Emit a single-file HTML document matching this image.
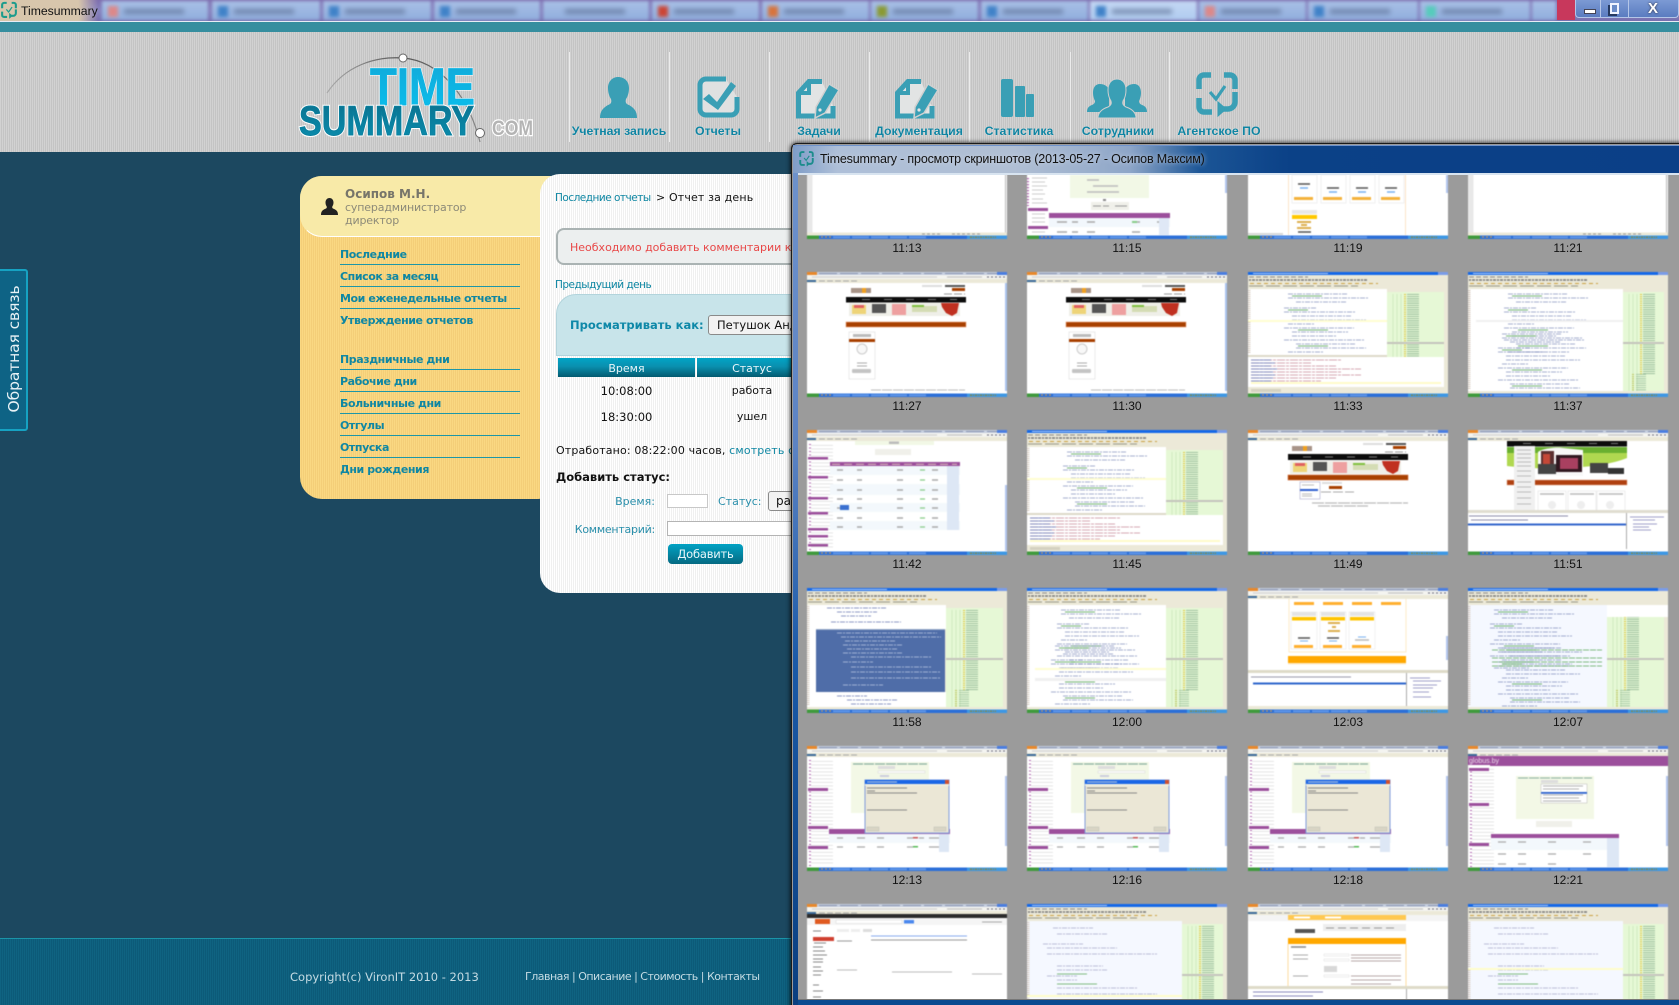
<!DOCTYPE html>
<html lang="ru"><head><meta charset="utf-8"><title>Timesummary</title>
<style>
html,body{margin:0;padding:0;background:#1c4860}
#p{position:relative;width:1679px;height:1005px;overflow:hidden;background:#1c4860;font-family:"DejaVu Sans","Liberation Sans",sans-serif;font-size:11px;color:#111}
.a{position:absolute;white-space:nowrap}
.nl{position:absolute;top:123px;font:bold 12.3px/16px "Liberation Sans",sans-serif;color:#0f84a2;text-align:center;width:100px;text-shadow:0 0 1px #fff}
.sep{position:absolute;top:52px;height:90px;width:1px;background:#ececec}
.ml{position:absolute;left:340px;width:180px;height:21px;border-bottom:1px solid #1d96a8;font:bold 11px/23px "DejaVu Sans",sans-serif;color:#0f87a3;letter-spacing:-.42px}
.tab{position:absolute;top:1px;height:19px;background:linear-gradient(#a9c0e6,#90aedd);box-shadow:0 0 3px #7c6bb0}
.tab i{position:absolute;left:22px;top:8px;height:5px;width:60px;background:#5c6f94;filter:blur(2px);opacity:.7}
.tab b{position:absolute;left:6px;top:5px;width:10px;height:11px;background:#3f82c8;filter:blur(1px)}
.hd{background:linear-gradient(#01a4c6,#0a8fae 45%,#035b70);color:#e8f6fa;text-align:center;font-size:11px;line-height:21px}
.lk{font-size:10.5px;letter-spacing:-.5px;color:#0f87a3;line-height:16px}
a{color:inherit;text-decoration:none}
</style></head><body><div id="p">

<!-- OS title strip -->
<div class="a" style="left:0;top:0;width:1679px;height:21px;overflow:hidden;background:#7b66a8">
<div style="position:absolute;left:-4px;top:-4px;width:1690px;height:30px;filter:blur(1.6px);background:linear-gradient(#7b66a8,#8a86c0 50%,#6f64a6)">
<div class="tab" style="left:106px;top:5px;width:106px"><b style="background:#d88"></b><i></i></div>
<div class="tab" style="left:216px;top:5px;width:108px"><b></b><i></i></div>
<div class="tab" style="left:327px;top:5px;width:108px"><b></b><i></i></div>
<div class="tab" style="left:438px;top:5px;width:106px"><b></b><i></i></div>
<div class="tab" style="left:547px;top:5px;width:106px"><i></i></div>
<div class="tab" style="left:656px;top:5px;width:107px"><b style="background:#c43"></b><i></i></div>
<div class="tab" style="left:766px;top:5px;width:107px"><b style="background:#d8733a"></b><i></i></div>
<div class="tab" style="left:875px;top:5px;width:107px"><b style="background:#8a9a30"></b><i></i></div>
<div class="tab" style="left:985px;top:5px;width:107px"><b></b><i></i></div>
<div class="tab" style="left:1094px;top:5px;width:107px;background:linear-gradient(#c4d8f4,#b0ccf0)"><b></b><i></i></div>
<div class="tab" style="left:1203px;top:5px;width:107px"><b style="background:#d88"></b><i></i></div>
<div class="tab" style="left:1312px;top:5px;width:110px"><b></b><i></i></div>
<div class="tab" style="left:1424px;top:5px;width:110px"><b style="background:#5cb"></b><i></i></div>
<div class="tab" style="left:1536px;top:5px;width:24px"></div>
</div></div>
<div class="a" style="left:1557px;top:0;width:18px;height:20px;background:#c8385c"></div>
<div class="a" style="left:0;top:0;width:98px;height:21px;background:linear-gradient(90deg,#d8c6ac 80%,rgba(192,168,176,0))"></div>
<svg class="a" style="left:1px;top:1px" width="16" height="19" viewBox="0 0 42 46"><use href="#ag" stroke="#1c9c8c" fill="#1c9c8c"/></svg>
<div class="a" style="left:21px;top:3px;font:12.2px/16px 'Liberation Sans',sans-serif;color:#111">Timesummary</div>
<div class="a" style="left:1575px;top:0;width:104px;height:18px;background:linear-gradient(#7c9ad4,#5a7cc0);border:1px solid #b4c6e8;border-top:0;border-radius:0 0 4px 4px;box-sizing:border-box"></div>
<div class="a" style="left:1600px;top:0;width:1px;height:17px;background:#b4c6e8"></div>
<div class="a" style="left:1628px;top:0;width:1px;height:17px;background:#b4c6e8"></div>
<div class="a" style="left:1584px;top:9px;width:10px;height:3px;background:#fff;border:1px solid #445"></div>
<div class="a" style="left:1610px;top:3px;width:5px;height:7px;background:#6a8cc8;border:2px solid #f0f4ff;box-shadow:-2px 2px 0 #263a60"></div>
<div class="a" style="left:1648px;top:0;font:bold 15px/17px 'Liberation Sans',sans-serif;color:#fff;text-shadow:0 0 2px #223">X</div>
<div class="a" style="left:0;top:21px;width:1679px;height:1px;background:#e8ecf4"></div>
<div class="a" style="left:0;top:22px;width:1679px;height:10px;background:#368e9f"></div>

<!-- Header -->
<div class="a" style="left:0;top:32px;width:1679px;height:120px;background:repeating-linear-gradient(90deg,#d2d2d2 0 1px,#c4c4c4 1px 2px)"></div>

<svg class="a" style="left:290px;top:50px" width="250" height="96" viewBox="290 50 250 96">
<defs><linearGradient id="gt" x1="0" y1="0" x2="0" y2="1"><stop offset="0" stop-color="#13a8d8"/><stop offset="1" stop-color="#08c0ee"/></linearGradient>
<linearGradient id="gs" x1="0" y1="0" x2="0" y2="1"><stop offset="0" stop-color="#0a6f8c"/><stop offset="1" stop-color="#0a8fb0"/></linearGradient>
<linearGradient id="arc" x1="0" y1="0" x2="1" y2="0"><stop offset="0" stop-color="#aaa"/><stop offset=".5" stop-color="#555"/><stop offset="1" stop-color="#888"/></linearGradient></defs>
<path d="M327 93C345 66 375 56 403 58C440 61 468 95 480 142" fill="none" stroke="url(#arc)" stroke-width="1.2"/>
<circle cx="403" cy="58" r="4" fill="#fff" stroke="#666"/>
<text x="370" y="105" font-family="Liberation Sans" font-weight="700" font-size="53" textLength="105" lengthAdjust="spacingAndGlyphs" fill="url(#gt)" stroke="#fff" stroke-width="2" paint-order="stroke">TIME</text>
<text x="370" y="105" font-family="Liberation Sans" font-weight="700" font-size="53" textLength="105" lengthAdjust="spacingAndGlyphs" fill="url(#gt)" stroke="#10b4e2" stroke-width=".9">TIME</text>
<text x="299" y="135" font-family="Liberation Sans" font-weight="700" font-size="42" textLength="175" lengthAdjust="spacingAndGlyphs" fill="url(#gs)" stroke="#fff" stroke-width="3" paint-order="stroke">SUMMARY</text>
<text x="299" y="135" font-family="Liberation Sans" font-weight="700" font-size="42" textLength="175" lengthAdjust="spacingAndGlyphs" fill="url(#gs)" stroke="#0a7f9e" stroke-width=".9">SUMMARY</text>
<circle cx="480" cy="133" r="4.5" fill="#fff" stroke="#666"/>
<text x="492" y="135" font-family="Liberation Sans" font-weight="700" font-size="21" textLength="41" lengthAdjust="spacingAndGlyphs" fill="#b4b4b4" stroke="#fff" stroke-width="2.5" paint-order="stroke">COM</text>
</svg>

<div class="sep" style="left:569px"></div><div class="sep" style="left:669px"></div><div class="sep" style="left:769px"></div><div class="sep" style="left:869px"></div><div class="sep" style="left:969px"></div><div class="sep" style="left:1070px"></div><div class="sep" style="left:1169px"></div>

<svg class="a" style="left:0;top:0;pointer-events:none" width="1300" height="130" viewBox="0 0 1300 130">
<defs>
<g id="ag" stroke-width="0"><path d="M15 3H8a5 5 0 0 0-5 5V17M28 3h6a5 5 0 0 1 5 5V17M3 26v9a5 5 0 0 0 5 5h8M39 20v10a7 7 0 0 1-7 7h-6" fill="none" stroke-width="5.500"/><path d="M30 37l-8-7v14z" stroke-width="1"/><path d="M14 20l6 7 9-13" fill="none" stroke-width="3.200"/></g>
<g id="nt"><path d="M26 2.500H13L2.500 14V37H37V27" fill="#e2e4e4" stroke="#3a9fb5" stroke-width="5"/><path d="M13 2V14H2" fill="none" stroke="#3a9fb5" stroke-width="4"/><path d="M33 5l10 6-14 23-10 5 1-11z" fill="#3a9fb5" stroke="#d0d0d0" stroke-width="1.500"/><circle cx="24" cy="31" r="1.600" fill="#e4e4e4"/></g>
</defs>
<path transform="translate(600 77)" d="M18 0c-6 0-10 5-10 11 0 4 1 8 3 11 1 3 0 5-3 6-5 3-8 6-8 13h37c0-7-3-10-8-13-3-1-4-3-3-6 2-3 3-7 3-11 0-6-4-11-11-11z" fill="#3a9fb5"/>
<g transform="translate(697 76)"><path d="M29 3H9a6 6 0 0 0-6 6V33a6 6 0 0 0 6 6H34a6 6 0 0 0 6-6V21" fill="#dfe1e1" stroke="#3a9fb5" stroke-width="5"/><path d="M12 18l8 8L34 6l5 4-18 24-15-11z" fill="#3a9fb5"/></g>
<use href="#nt" x="796" y="79"/><use href="#nt" x="895" y="79"/>
<g fill="#3a9fb5"><rect x="1001" y="79" width="12" height="38" rx="2"/><rect x="1015" y="86" width="10" height="31" rx="1"/><rect x="1026" y="94" width="8" height="23" rx="1"/></g>
<g transform="translate(1087 79)" fill="#3a9fb5"><path d="M13 5c-5 0-7 4-7 9 0 3 1 6 2 8 0 2-1 3-3 4-3 1-5 3-5 7h16l6-5V10c-2-3-5-5-9-5zM47 5c5 0 7 4 7 9 0 3-1 6-2 8 0 2 1 3 3 4 3 1 5 3 5 7H44l-6-5V10c2-3 5-5 9-5z"/><path d="M30 0c-6 0-9 5-9 11 0 4 1 8 3 11 1 3-1 5-3 6-6 2-10 5-10 11h38c0-6-4-9-10-11-2-1-4-3-3-6 2-3 3-7 3-11 0-6-3-11-9-11z" stroke="#cfcfcf" stroke-width="1"/></g>
<use href="#ag" x="1196" y="72" stroke="#3a9fb5" fill="#3a9fb5"/>
</svg>

<div class="nl" style="left:569px">Учетная запись</div>
<div class="nl" style="left:668px">Отчеты</div>
<div class="nl" style="left:769px">Задачи</div>
<div class="nl" style="left:869px">Документация</div>
<div class="nl" style="left:969px">Статистика</div>
<div class="nl" style="left:1068px">Сотрудники</div>
<div class="nl" style="left:1169px">Агентское ПО</div>

<!-- Feedback tab -->
<div class="a" style="left:-3px;top:269px;width:31px;height:162px;box-sizing:border-box;background:#0e6385;border:2px solid #16a2c2;border-radius:3px"></div>
<div class="a" style="left:14px;top:349px;width:0;height:0"><div style="transform:translate(-50%,-50%) rotate(-90deg);white-space:nowrap;font:15.5px/18px 'DejaVu Sans',sans-serif;color:#e8f2f6;width:134px;text-align:center;letter-spacing:-.1px">Обратная связь</div></div>

<!-- Sidebar -->
<div class="a" style="left:300px;top:176px;width:260px;height:323px;border-radius:22px;background:repeating-linear-gradient(90deg,#fad882 0 1px,#f4ce78 1px 2px)"></div>
<div class="a" style="left:300px;top:176px;width:260px;height:61px;box-sizing:border-box;border-radius:22px 0 0 22px;background:#f8eaa8;border:1px solid #fff;border-right:0;border-top-color:#f8eaa8;border-left-color:#f8eaa8"></div>
<svg class="a" style="left:321px;top:198px" width="17" height="17" viewBox="0 0 17 17"><path d="M8.500 0c-2.500 0-4 2-4 4.500 0 1.500.5 3 1.200 4 .3 1 0 1.800-1.200 2.300C2 11.800 0 13 0 17h17c0-4-2-5.200-4.500-6.200-1.200-.5-1.500-1.300-1.200-2.300.7-1 1.200-2.500 1.200-4C12.500 2 11 0 8.500 0z" fill="#222"/></svg>
<div class="a" style="left:345px;top:187px;font:bold 12px/14px 'DejaVu Sans',sans-serif;color:#77756a">Осипов М.Н.</div>
<div class="a" style="left:345px;top:201px;font:11px/14px 'DejaVu Sans',sans-serif;color:#8c8a78;letter-spacing:-.15px">суперадминистратор</div>
<div class="a" style="left:345px;top:214px;font:11px/14px 'DejaVu Sans',sans-serif;color:#8c8a78;letter-spacing:-.15px">директор</div>

<div class="ml" style="top:243px">Последние</div>
<div class="ml" style="top:265px">Список за месяц</div>
<div class="ml" style="top:287px">Мои еженедельные отчеты</div>
<div class="ml" style="top:309px;border:0">Утверждение отчетов</div>
<div class="ml" style="top:348px">Праздничные дни</div>
<div class="ml" style="top:370px">Рабочие дни</div>
<div class="ml" style="top:392px">Больничные дни</div>
<div class="ml" style="top:414px">Отгулы</div>
<div class="ml" style="top:436px">Отпуска</div>
<div class="ml" style="top:458px;border:0">Дни рождения</div>

<!-- Content panel -->
<div class="a" style="left:540px;top:174px;width:270px;height:419px;border-radius:20px 0 0 20px;background:repeating-linear-gradient(90deg,#fff 0 1px,#f0f0f0 1px 2px)"></div>
<div class="a lk" style="left:555px;top:190px">Последние отчеты</div>
<div class="a" style="left:656px;top:190px;line-height:16px;color:#111">&gt;</div>
<div class="a" style="left:669px;top:190px;line-height:16px;color:#111;letter-spacing:.15px">Отчет за день</div>
<div class="a" style="left:556px;top:228px;width:260px;height:37px;box-sizing:border-box;background:#ecefef;border:2px solid #aab3b3;border-radius:8px"></div>
<div class="a" style="left:570px;top:240px;font-size:11px;line-height:16px;color:#e84848;width:222px;overflow:hidden">Необходимо добавить комментарии к</div>
<div class="a lk" style="left:555px;top:277px">Предыдущий день</div>
<div class="a" style="left:556px;top:294px;width:260px;height:62px;box-sizing:border-box;background:#c8e4ea;border:1px solid #b2d4dc;border-radius:20px 0 0 0"></div>
<div class="a" style="left:570px;top:317px;font:bold 11.5px/16px 'DejaVu Sans',sans-serif;color:#0e88a8">Просматривать как:</div>
<div class="a" style="left:708px;top:315px;width:110px;height:20px;box-sizing:border-box;background:#f2f2f2;border:1px solid #8a8a8a;border-radius:3px;font-size:11.5px;line-height:18px;padding-left:8px;color:#111">Петушок Андрей</div>
<div class="a hd" style="left:558px;top:358px;width:137px;height:19px">Время</div>
<div class="a hd" style="left:697px;top:358px;width:110px;height:19px"><div style="position:absolute;left:110px;top:0;width:10px;height:19px;background:#06809c"></div>Статус</div>
<div class="a" style="left:558px;top:383px;width:137px;text-align:center;font-size:11.5px;line-height:16px">10:08:00</div>
<div class="a" style="left:692px;top:383px;width:120px;text-align:center;font-size:11px;line-height:16px">работа</div>
<div class="a" style="left:558px;top:409px;width:137px;text-align:center;font-size:11.5px;line-height:16px">18:30:00</div>
<div class="a" style="left:692px;top:409px;width:120px;text-align:center;font-size:11px;line-height:16px">ушел</div>
<div class="a" style="left:556px;top:443px;font-size:11px;line-height:16px;letter-spacing:.15px">Отработано: 08:22:00 часов, <span style="color:#0f87a3">смотреть скриншоты</span></div>
<div class="a" style="left:556px;top:469px;font:bold 11.500px/16px 'DejaVu Sans',sans-serif;color:#111">Добавить статус:</div>
<div class="a" style="left:560px;width:95px;text-align:right;top:494px;font-size:11px;line-height:16px;color:#2a8fab">Время:</div>
<div class="a" style="left:667px;top:494px;width:41px;height:14px;box-sizing:border-box;background:#fff;border:1px solid #c8c8c8"></div>
<div class="a" style="left:718px;top:494px;font-size:11px;line-height:16px;color:#2a8fab">Статус:</div>
<div class="a" style="left:768px;top:491px;width:50px;height:20px;box-sizing:border-box;background:#f2f2f2;border:1px solid #8a8a8a;border-radius:3px;font-size:12px;line-height:18px;padding-left:7px">работа</div>
<div class="a" style="left:560px;width:95px;text-align:right;top:522px;font-size:11px;line-height:16px;color:#2a8fab;letter-spacing:-.25px">Комментарий:</div>
<div class="a" style="left:667px;top:521px;width:150px;height:15px;box-sizing:border-box;background:#fff;border:1px solid #b4b4b4"></div>
<div class="a" style="left:668px;top:544px;width:75px;height:20px;border-radius:4px;background:linear-gradient(#01a2c4,#056a82);color:#e8f6fa;font-size:11.5px;line-height:20px;text-align:center;letter-spacing:-.2px">Добавить</div>

<!-- Footer -->
<div class="a" style="left:0;top:938px;width:1679px;height:1px;background:#1a94a8"></div>
<div class="a" style="left:0;top:939px;width:1679px;height:66px;background:repeating-linear-gradient(90deg,#0f6381 0 1px,#0c5a78 1px 2px)"></div>
<div class="a" style="left:290px;top:969px;font-size:11.5px;line-height:16px;color:#c4dbe3">Copyright(c) VironIT 2010 - 2013</div>
<div class="a" style="left:525px;top:969px;font-size:11px;line-height:16px;color:#c4dbe3;letter-spacing:-.5px">Главная | Описание | Стоимость | Контакты</div>

<!-- Window -->
<div class="a" style="left:792px;top:144px;width:900px;height:870px;background:#9b9b9b;border-radius:5px 0 0 0;box-shadow:-2px 0 5px rgba(0,0,0,.55),0 -2px 4px rgba(0,0,0,.5);outline:1px solid #1a1a1a"></div>
<div class="a" style="left:793px;top:145px;width:5px;height:860px;background:linear-gradient(#6f93cc,#5c83c4 35%,#1b5aa8 60%,#0a3f80)"></div>
<div class="a" style="left:793px;top:145px;width:886px;height:28px;background:linear-gradient(90deg,#7f9dc8,#aebfd8 5%,#b0bfd4 25%,#8ea6c8 38%,#1b5596 46%,#0b4187 56%,#0b3f87);box-shadow:inset 0 1px 0 #6f93cc"></div>
<div class="a" style="left:798px;top:173px;width:881px;height:2px;background:#d8e4f0"></div>
<svg class="a" style="left:799px;top:151px" width="15" height="16" viewBox="0 0 42 46"><use href="#ag" stroke="#1c8c8c" fill="#1c8c8c"/></svg>
<div class="a" style="left:820px;top:151px;font:12.5px/16px 'Liberation Sans',sans-serif;letter-spacing:-.17px;color:#111;text-shadow:0 0 5px #d0d8e4">Timesummary - просмотр скриншотов (2013-05-27 - Осипов Максим)</div>
<div class="a" style="left:798px;top:999px;width:881px;height:1px;background:#777"></div>
<div class="a" style="left:798px;top:1000px;width:881px;height:5px;background:#0a4a90"></div>

<!-- Thumbnails -->
<svg class="a" style="left:798px;top:175px" width="881" height="824" viewBox="0 0 881 824">
<defs>
<g id="tb"><rect y="121.500" width="200" height="3.500" fill="#2b6fd8"/><rect y="121.500" width="12" height="3.500" fill="#3f9a3c"/><path d="M14 123h2M18 123h2M22 123h2" stroke="#e0a040"/><path d="M26 123.200H120" stroke="#5f95e8" stroke-width="2" stroke-dasharray="17 2"/><rect x="160" y="121.500" width="40" height="3.500" fill="#3d97e4"/><path d="M163 123.200h26" stroke="#884" stroke-width="1.500" stroke-dasharray="2 1 1 1"/></g>
<g id="ff"><rect width="200" height="3" fill="#c6cfe0"/><rect width="10" height="3" fill="#e8882a"/><path d="M12 1.500H200" stroke="#8a95b0" stroke-width="1" stroke-dasharray="18 3"/><rect x="190" width="10" height="3" fill="#4a7de0"/><rect y="3" width="200" height="4" fill="#f4f4f0"/><path d="M5 5H130" stroke="#ccc"/><path d="M140 5h35" stroke="#bbb"/><path d="M180 5h18" stroke="#667" stroke-dasharray="2 2"/><rect y="7" width="200" height="4" fill="#ece9d8"/><rect y="8" width="9" height="2" fill="#3a6a9a"/><path d="M12 9H50" stroke="#a8a8a8" stroke-dasharray="6 2"/><rect y="11" width="200" height="111" fill="#fff"/></g>
<g id="ideC"><rect width="200" height="125" fill="#ece9d8"/><rect width="200" height="3" fill="#1468e8"/><path d="M5 1.500H80" stroke="#a8c8f8"/><rect x="190" width="10" height="3" fill="#7a9ce8"/><path d="M1 5H60" stroke="#888" stroke-dasharray="5 2"/><path d="M1 8H120" stroke="#777" stroke-width="1.500" stroke-dasharray="2 1 3 1"/><path d="M2 11.500H130" stroke="#caa040" stroke-width="1" stroke-dasharray="4 3"/><path d="M1 14H110" stroke="#998" stroke-dasharray="14 3"/></g>
<g id="tree"><rect width="57" height="104" fill="#e6f8d6"/><rect y="0" width="57" height="3" fill="#ece9d8"/><path d="M6 5v98M10 5v98M14 5v98" stroke="#bcdca8" stroke-width=".5"/><path d="M18 5V85" stroke="#e0c840" stroke-width="2" stroke-dasharray="1 1.200"/><path d="M26 5V85" stroke="#6a9a78" stroke-width="12" stroke-dasharray=".8 1.400" opacity=".75"/><path d="M10 85V103" stroke="#c0c860" stroke-width="2" stroke-dasharray="1 1.200"/><path d="M18 85V103" stroke="#6a9a78" stroke-width="10" stroke-dasharray=".8 1.400" opacity=".6"/><rect y="53" width="57" height="2" fill="#c4c4bc"/></g>
<g id="cd1"><path d="M1 18V82" stroke="#c9b8a8" stroke-width="3" stroke-dasharray=".8 1.200"/><path d="M40 22h60M40 26h80M48 30h50M36 36h32M36 40h72M44 44h60M44 48h74M40 52h26M36 56h70M44 60h56M44 64h44M36 68h80M48 72h60M48 76h70M40 80h36" stroke="#6a7ab0" stroke-width=".8" stroke-dasharray="5 1 2 1" opacity=".8"/><path d="M44 24h30M40 38h20M50 58h30M50 74h30" stroke="#48a048" stroke-width=".8"/></g>
<g id="log"><rect y="83" width="139" height="2" fill="#dcd9c8"/><rect y="85" width="196" height="30" fill="#fff"/><path d="M3 88h90M3 91h60M3 94h85M3 97h110M3 100h90M3 103h110M3 106h85M3 109h70" stroke="#c88a9a" stroke-width=".8" stroke-dasharray="8 1 3 1"/><path d="M3 88h20M3 91h24M3 94h20M3 97h26M3 100h22M3 103h24M3 106h22M3 109h20" stroke="#6a80c0" stroke-width=".8"/><rect x="3" y="110" width="190" height="2" fill="#fffcc8"/></g>

<symbol id="sW" viewBox="0 0 200 125"><rect width="200" height="125" fill="#fff"/><rect width="5.500" height="119" fill="#e8e8e8"/><rect x="198" width="1" height="119" fill="#bbb"/><rect y="118.500" width="200" height="3" fill="#ece9d8"/><path d="M115 120h20M145 120h30" stroke="#999" stroke-dasharray="3 2"/><use href="#tb"/></symbol>

<symbol id="sA" viewBox="0 0 200 125"><rect width="200" height="125" fill="#fff"/><rect x="43" y="61" width="79" height="23" fill="#f2f8e6"/><path d="M60 66h12M66 72h25M60 78h32" stroke="#bbb" stroke-width="1.500"/><rect x="76" y="85" width="3" height="2" fill="#888"/><rect x="64" y="88" width="38" height="8" fill="#f0f0ea"/><path d="M66 92h8M76 92h6M88 92h12" stroke="#999"/><path d="M1 64V92" stroke="#b068b0" stroke-width="2" stroke-dasharray="1.200 1.800"/><path d="M5 64H20M5 68H18M5 72H20M5 76H16M5 80H18M5 85H16M5 89H20" stroke="#ccc"/><rect x="1" y="94" width="20" height="3" fill="#9c4f9c"/><rect x="1" y="112" width="20" height="3" fill="#9c4f9c"/><path d="M5 100H18M5 104H18M5 108H18M5 118H18" stroke="#ccc"/><rect x="22" y="99" width="121" height="5" fill="#9c4f9c"/><rect x="22" y="104" width="121" height="9" fill="#f2f7fc"/><path d="M30 108h10M45 108h6M60 108h8M105 108h8M130 108h8" stroke="#aaa" stroke-width="1.500"/><path d="M30 118h10M45 118h6M60 118h8M105 118h8" stroke="#aaa" stroke-width="1.500"/><rect x="132" y="104" width="10" height="17" fill="#dfe8f6"/><rect x="105" y="107" width="5" height="2" fill="#8c8"/><rect x="198" y="61" width="2" height="18" fill="#b2c6ee"/><use href="#tb"/></symbol>

<symbol id="sS" viewBox="0 0 200 125"><rect width="200" height="125" fill="#fff"/><path d="M40.500 60V121M157.500 60V121" stroke="#fbe3c8"/><g fill="none" stroke="#f0f0f0"><rect x="44" y="61" width="25" height="28"/><rect x="73" y="61" width="25" height="28"/><rect x="102" y="61" width="25" height="28"/><rect x="131" y="61" width="25" height="28"/></g><path d="M50 70h12M79 74h12M108 74h12M137 74h12" stroke="#555" stroke-width="1.500"/><path d="M52 74h8M81 78h8M110 78h8M139 78h8" stroke="#77b0f0" stroke-width="1.500"/><rect x="46" y="83" width="19" height="3" fill="#f4b23c"/><rect x="75" y="83" width="19" height="3" fill="#f4b23c"/><rect x="104" y="83" width="19" height="3" fill="#f4b23c"/><rect x="133" y="83" width="19" height="3" fill="#f4b23c"/><rect x="44" y="96" width="25" height="4" fill="#e8e8e8"/><rect x="44" y="101" width="25" height="4" fill="#ffc800"/><path d="M49 108h14M53 111h6M49 114h14" stroke="#ddb050" stroke-width="2"/><path d="M50 118h13" stroke="#555" stroke-width="1.500"/><rect y="119" width="35" height="2" fill="#d8d8d8"/><rect x="198" y="61" width="2" height="18" fill="#b2c6ee"/><use href="#tb"/></symbol>

<g id="au"><use href="#ff"/><rect x="44" y="16" width="20" height="5" fill="#a89488"/><rect x="55" y="16" width="4" height="5" fill="#f0a020"/><rect x="115" y="13" width="20" height="2" fill="#ddd"/><rect x="138" y="13" width="20" height="2" fill="#555"/><rect x="145" y="16" width="13" height="3" fill="#a84000"/><path d="M137 22H158" stroke="#999" stroke-dasharray="8 2"/></g>
<g id="ban"><rect x="42" y="31" width="111" height="13" fill="#efefe8"/><rect x="45" y="33" width="14" height="9" fill="#eed478"/><rect x="47" y="33" width="10" height="3" fill="#e06060"/><rect x="65" y="32" width="14" height="9" fill="#555"/><rect x="85" y="32" width="14" height="11" fill="#eea0a0"/><rect x="105" y="34" width="25" height="6" fill="#d4dcb4"/><rect x="105" y="33" width="12" height="2" fill="#80c040"/><path d="M134 31h18l-2 10-5 3-6-3-4-6z" fill="#c03020"/></g>

<symbol id="sD" viewBox="0 0 200 125"><use href="#au"/><rect x="39" y="25" width="120" height="5.500" fill="#0c0c0c"/><path d="M55 27.500H150" stroke="#777" stroke-dasharray="8 14"/><use href="#ban"/><rect x="39" y="50" width="120" height="5" fill="#a84000" stroke="#e8a078" stroke-width=".6"/><rect x="42" y="60" width="26" height="47" fill="#fff" stroke="#ddd" stroke-width=".6"/><rect x="46" y="62" width="18" height="3" fill="#bbb"/><rect x="42" y="67" width="26" height="3" fill="#a84000"/><circle cx="55" cy="77" r="5" fill="#f8f8f8" stroke="#ccc"/><path d="M50 91h10M50 94h10" stroke="#aaa"/><rect x="45" y="97" width="19" height="4" rx="1" fill="#c4c4c4"/><rect x="198" y="11" width="2" height="108" fill="#aac4ee"/><path d="M64 118H158" stroke="#bbb" stroke-dasharray="10 1"/><use href="#tb"/></symbol>

<symbol id="sH" viewBox="0 0 200 125"><use href="#au"/><rect x="40" y="24" width="120" height="6" fill="#0c0c0c"/><path d="M55 27H150" stroke="#777" stroke-dasharray="8 14"/><use href="#ban"/><rect x="40" y="45" width="120" height="5" fill="#a84000" stroke="#d07040" stroke-width=".6"/><rect x="52" y="52" width="20" height="17" fill="#fff" stroke="#aac" stroke-width=".6"/><rect x="52" y="59" width="18" height="2" fill="#3060d0"/><path d="M54 55h12M54 64h10M54 66h10" stroke="#bbb"/><rect x="74" y="52" width="20" height="2" fill="#ddd"/><rect x="81" y="56" width="13" height="3" fill="#a84000"/><path d="M73 62h33" stroke="#aaa" stroke-dasharray="10 2"/><path d="M64 73h96M70 76h50" stroke="#bbb" stroke-width="1.200" stroke-dasharray="12 1"/><use href="#tb"/></symbol>

<symbol id="sI" viewBox="0 0 200 125"><use href="#ff"/><rect x="39" y="11" width="120" height="5.500" fill="#0c0c0c"/><path d="M55 13.500H150" stroke="#777" stroke-dasharray="8 14"/><rect x="39" y="17" width="120" height="30" fill="#fff"/><path d="M39 17H159V28C130 40 70 40 39 36z" fill="#b0d850"/><rect x="39" y="17" width="120" height="6" fill="#6ab030"/><path d="M70 38V22C75 18 90 17 95 18L115 20V46H70z" fill="#f8f8f8"/><rect x="73" y="21" width="13" height="22" fill="#5c3030"/><rect x="75" y="24" width="7" height="16" fill="#c44838"/><rect x="70" y="34" width="18" height="10" fill="#444"/><rect x="88" y="25" width="26" height="17" fill="#301820"/><rect x="92" y="28" width="18" height="11" fill="#a84060"/><rect x="122" y="33" width="18" height="10" fill="#444"/><rect x="140" y="38" width="16" height="6" fill="#333"/><rect x="39" y="50" width="120" height="5" fill="#b04010" stroke="#e0a080" stroke-width=".5"/><g fill="#fff" stroke="#eee"><rect x="70" y="61" width="28" height="20"/><rect x="100" y="61" width="28" height="20"/><rect x="129" y="61" width="28" height="20"/></g><path d="M72 64h24M102 64h24M131 64h24" stroke="#bbb" stroke-width="1.500"/><circle cx="84" cy="75" r="4" fill="#eee"/><circle cx="113" cy="75" r="4" fill="#eee"/><circle cx="142" cy="75" r="4" fill="#eee"/><rect x="46" y="16" width="21" height="64" fill="#f0f0f0"/><path d="M49 20H63M49 24H63M49 28H63M49 32H63M49 36H63M49 41H63M49 46H63M49 52H63M49 57H63M49 62H63M49 68H63M49 74H63" stroke="#bbb" stroke-width="1"/><rect y="80" width="200" height="3" fill="#e0ddd0"/><rect y="83" width="200" height="36" fill="#fff"/><path d="M1 86H100M3 90H60" stroke="#8a8aaa"/><rect y="93.500" width="158" height="2" fill="#3366cc"/><rect x="158" y="83" width="1" height="36" fill="#aaa"/><path d="M162 87h34M165 90h22M165 94h24M165 97h16M165 100h18" stroke="#88b" opacity=".8"/><use href="#tb"/></symbol>

<symbol id="sJ" viewBox="0 0 200 125"><use href="#ff"/><g fill="#ffb030"><rect x="46" y="14" width="20" height="3"/><rect x="75" y="14" width="20" height="3"/><rect x="104" y="14" width="20" height="3"/><rect x="133" y="14" width="20" height="3"/></g><path d="M41 11v53h117V11" fill="none" stroke="#fdebc8"/><g fill="#fff" stroke="#f2f2f2"><rect x="43" y="24" width="26" height="37"/><rect x="72" y="24" width="26" height="37"/><rect x="101" y="24" width="26" height="37"/></g><g fill="#e4e4e4"><rect x="44" y="24" width="24" height="4"/><rect x="73" y="24" width="24" height="4"/><rect x="102" y="24" width="24" height="4"/></g><g fill="#ffc400"><rect x="44" y="29" width="24" height="3.500"/><rect x="73" y="29" width="24" height="3.500"/><rect x="102" y="29" width="24" height="3.500"/></g><path d="M80 35h12M84 39h4M80 43h12" stroke="#ddb050" stroke-width="2"/><path d="M50 50h12M79 50h12" stroke="#555" stroke-width="1.500"/><path d="M107 52h14" stroke="#bbb" stroke-width="1.500"/><path d="M52 53h8M81 53h8M110 49h8" stroke="#77b0f0"/><g fill="#ffb030"><rect x="46" y="57" width="19" height="3"/><rect x="75" y="57" width="19" height="3"/><rect x="104" y="57" width="19" height="3"/></g><rect x="40" y="68" width="118" height="7" fill="#ffa800"/><rect x="40" y="75" width="118" height="1.500" fill="#fdebc8"/><rect x="198" y="48" width="2" height="24" fill="#b2c6ee"/><rect y="82" width="200" height="3" fill="#dedbc8"/><rect y="85" width="200" height="33" fill="#fff"/><path d="M3 89h100" stroke="#99a"/><rect x="5" y="94.500" width="153" height="2" fill="#2e66cc"/><rect x="158" y="85" width="1" height="33" fill="#aaa"/><path d="M162 90h20M165 93h28M165 97h24M165 100h20M165 104h16M165 109h18" stroke="#88b" opacity=".8"/><rect y="118" width="200" height="3.500" fill="#ece9d8"/><use href="#tb"/></symbol>

<g id="lc"><rect width="22" height="122" y="11" fill="#fff"/><path d="M3 14V120" stroke="#b068b0" stroke-width="2" stroke-dasharray="1 2.500"/><path d="M6 14V120" stroke="#aaa" stroke-width="22" stroke-dasharray=".7 2.800" stroke-dashoffset="-1" transform="translate(9 0)" opacity=".38"/></g>

<symbol id="sB" viewBox="0 0 200 125"><use href="#ff"/><use href="#lc"/><rect x="48" y="11" width="79" height="4" fill="#f2f8e6"/><rect x="82" y="11.500" width="10" height="2.500" fill="#bbb"/><rect x="68" y="19" width="36" height="6" fill="#f0f0ea"/><rect x="1" y="27" width="20" height="2.500" fill="#9c4f9c"/><rect x="1" y="46" width="20" height="2.500" fill="#9c4f9c"/><rect x="1" y="67" width="20" height="2.500" fill="#9c4f9c"/><rect x="1" y="82" width="20" height="2.500" fill="#9c4f9c"/><rect x="1" y="98" width="20" height="2.500" fill="#9c4f9c"/><rect x="1" y="105" width="20" height="2.500" fill="#9c4f9c"/><rect x="1" y="114" width="20" height="2.500" fill="#9c4f9c"/><rect x="23" y="32" width="130" height="4.500" fill="#9c4f9c"/><path d="M25 34.300H150" stroke="#dcb" stroke-dasharray="8 4" stroke-width=".8"/><rect x="23" y="36" width="130" height="9" fill="#f3f8fc"/><rect x="23" y="54" width="130" height="11" fill="#f3f8fc"/><rect x="23" y="73" width="130" height="9" fill="#f3f8fc"/><rect x="23" y="91" width="130" height="9" fill="#f3f8fc"/><path d="M30 40h6M30 50h6M30 60h6M30 69h6M30 78h6M30 88h6M30 97h6M50 40h5M50 50h5M50 60h5M50 69h5M50 78h5M50 88h5M50 97h5M90 40h6M90 50h6M90 60h6M90 69h6M90 78h6M90 88h6M90 97h6M125 40h6M125 50h6M125 60h6M125 69h6M125 78h6M125 88h6M125 97h6" stroke="#aaa" stroke-width="1.500"/><path d="M113 40h5M113 50h5M113 60h5M113 69h5M113 78h5M113 88h5M113 97h5" stroke="#8c8" stroke-width="1.200"/><rect x="33" y="75" width="9" height="5" fill="#3a70d0"/><rect x="140" y="36" width="12" height="64" fill="#dde7f5"/><rect x="198" y="55" width="2" height="66" fill="#b2c6ee"/><use href="#tb"/></symbol>

<symbol id="sK" viewBox="0 0 200 125"><use href="#ff"/><use href="#lc"/><rect x="1" y="42" width="20" height="3" fill="#9c4f9c"/><rect x="1" y="80" width="20" height="3" fill="#9c4f9c"/><rect x="1" y="100" width="20" height="3" fill="#9c4f9c"/><rect x="44" y="16" width="78" height="51" fill="#f3f8e6"/><path d="M46 18h74" stroke="#8ab0a0" stroke-width="1.200" stroke-dasharray="10 1"/><rect x="71" y="20" width="17" height="3" fill="#ddd"/><rect x="71" y="25" width="47" height="2" fill="#fff" stroke="#ccc" stroke-width=".4"/><rect x="73" y="29" width="9" height="2" fill="#ccd"/><rect x="22" y="83" width="121" height="5" fill="#9c4f9c"/><rect x="22" y="88" width="121" height="9" fill="#f3f8fc"/><path d="M30 92h6M50 92h8M70 92h7M100 92h6M112 92h5M122 92h10M30 101h6M50 101h8M70 101h7M100 101h6M122 101h10" stroke="#aaa" stroke-width="1.300"/><rect x="132" y="88" width="10" height="18" fill="#dde7f5"/><rect x="106" y="91" width="5" height="1.500" fill="#c55"/><rect x="106" y="100" width="5" height="1.500" fill="#5b5"/><rect x="58" y="34" width="84" height="53" fill="#ebe7d6" stroke="#7f9bdb"/><rect x="58" y="34" width="84" height="4" fill="#1a66e6"/><rect x="138" y="34" width="4" height="4" fill="#d05030"/><rect x="58" y="38" width="84" height="1.800" fill="#f0eee0"/><path d="M60 36h30" stroke="#bcd"/><path d="M60 42h40M60 45h8M60 47h50M60 64h40" stroke="#888" stroke-width=".9"/><rect x="60" y="81" width="12" height="4" fill="#d8d5c4" stroke="#aaa" stroke-width=".3"/><rect x="127" y="81" width="12" height="4" fill="#d8d5c4" stroke="#aaa" stroke-width=".3"/><rect x="198" y="30" width="2" height="70" fill="#b2c6ee"/><use href="#tb"/></symbol>

<symbol id="sL" viewBox="0 0 200 125"><use href="#ff"/><rect y="10" width="200" height="10" fill="#9c4f9c"/><text x="1" y="17" font-size="7" fill="#ecdcec" font-family="Liberation Sans">globus.by</text><use href="#lc" y="8"/><rect x="1" y="22" width="20" height="3" fill="#9c4f9c"/><rect x="1" y="57" width="20" height="3" fill="#9c4f9c"/><rect x="1" y="97" width="20" height="3" fill="#9c4f9c"/><rect x="48" y="30" width="78" height="43" fill="#f3f8e6"/><path d="M50 32h74" stroke="#8ab0a0" stroke-dasharray="10 1"/><rect x="73" y="38" width="46" height="19" fill="#fff" stroke="#aaa" stroke-width=".4"/><rect x="73" y="46" width="46" height="1.800" fill="#2a60cc"/><path d="M75 40h40M75 43h36M75 49h40M75 52h36M75 55h38" stroke="#999" stroke-width=".8"/><rect x="73" y="34" width="17" height="3" fill="#ddd"/><rect x="68" y="75" width="36" height="6" fill="#f0f0ea"/><rect x="23" y="88" width="128" height="4.500" fill="#9c4f9c"/><rect x="23" y="92" width="128" height="12" fill="#f3f8fc"/><path d="M30 96h8M50 96h8M80 96h8M115 96h8M30 108h8M50 108h8M80 108h8M115 108h8M30 118h8M50 118h8M80 118h8" stroke="#aaa" stroke-width="1.300"/><rect x="139" y="92" width="12" height="29" fill="#dde7f5"/><rect x="198" y="30" width="2" height="70" fill="#b2c6ee"/><use href="#tb"/></symbol>

<symbol id="sE" viewBox="0 0 200 125"><use href="#ideC"/><rect y="17" width="139" height="66" fill="#fff"/><use href="#cd1"/><rect y="48" width="139" height="2" fill="#fffdd0"/><use href="#tree" x="139" y="17"/><use href="#log"/><rect y="115" width="200" height="6.500" fill="#ece9d8"/><rect x="3" y="117" width="30" height="3" fill="#d4d1c0"/><use href="#tb"/></symbol>
<symbol id="sF" viewBox="0 0 200 125"><use href="#ideC"/><rect y="17" width="155" height="102" fill="#fff"/><path d="M1 18V118" stroke="#c9b8a8" stroke-width="3" stroke-dasharray=".8 1.200"/><use href="#cd1" y="0"/><use href="#cd1" y="40" x="-6"/><rect x="8" y="48" width="147" height="2" fill="#f0f0f0"/><use href="#tree" x="155" y="17"/><rect x="196" y="17" width="4" height="102" fill="#ece9d8"/><rect y="119" width="200" height="2.500" fill="#ece9d8"/><use href="#tb"/></symbol>
<symbol id="sG" viewBox="0 0 200 125"><use href="#ideC"/><rect y="17" width="139" height="102" fill="#fff"/><path d="M1 18V118" stroke="#c9b8a8" stroke-width="3" stroke-dasharray=".8 1.200"/><path d="M20 20h60M30 24h40M34 28h30M24 34h70" stroke="#6a7ab0" stroke-width=".8" stroke-dasharray="5 1 2 1"/><rect x="9" y="41" width="129" height="63" fill="#4f6da8"/><rect x="9" y="41" width="129" height="1" fill="#9aabc8"/><path d="M30 45h100M34 49h100M38 53h50M36 57h60M40 61h50M36 65h60M44 69h80M36 74h30M44 79h80M44 84h90M44 90h90M36 97h40" stroke="#c8d4ec" stroke-width=".8" stroke-dasharray="5 1 2 1" opacity=".9"/><rect x="138" y="41" width="2" height="63" fill="#ece9d8"/><path d="M30 108h30M40 112h50M44 116h40" stroke="#6a7ab0" stroke-width=".8" stroke-dasharray="5 1 2 1"/><use href="#tree" x="139" y="17"/><rect y="119" width="200" height="2.500" fill="#ece9d8"/><use href="#tb"/></symbol>
<symbol id="sN" viewBox="0 0 200 125"><use href="#ideC"/><rect y="17" width="139" height="102" fill="#fff"/><path d="M1 18V118" stroke="#c9b8a8" stroke-width="3" stroke-dasharray=".8 1.200"/><use href="#cd1" x="-6"/><use href="#cd1" x="-12" y="36"/><rect x="8" y="80" width="131" height="2" fill="#fffdd0"/><rect x="8" y="90" width="131" height="3" fill="#f0f0f0"/><use href="#tree" x="139" y="17"/><rect y="119" width="200" height="2.500" fill="#ece9d8"/><use href="#tb"/></symbol>
<symbol id="sP" viewBox="0 0 200 125"><use href="#ideC"/><rect y="17" width="139" height="102" fill="#f5f8ff"/><path d="M1 18V118" stroke="#c9b8a8" stroke-width="3" stroke-dasharray=".8 1.200"/><use href="#cd1" x="-14"/><use href="#cd1" x="-6" y="38"/><path d="M24 70h110M24 74h110M24 78h110M24 62h110" stroke="#58a858" stroke-width=".8" stroke-dasharray="6 1"/><use href="#tree" x="139" y="17"/><rect x="139" y="17" width="61" height="12" fill="#fff"/><rect y="119" width="200" height="2.500" fill="#ece9d8"/><use href="#tb"/></symbol>
<symbol id="sQ" viewBox="0 0 200 125"><use href="#ideC"/><rect y="17" width="155" height="108" fill="#f5f8ff"/><path d="M1 18V124" stroke="#c9b8a8" stroke-width="3" stroke-dasharray=".8 1.200"/><path d="M26 24h40M30 30h50M16 40h40M20 44h70M20 50h110M30 62h46M30 66h50M20 72h30M30 76h20M30 84h80M30 90h100M20 102h30" stroke="#8a90b8" stroke-width=".8" stroke-dasharray="5 1 2 1" opacity=".75"/><path d="M30 70h30M30 80h40" stroke="#58a858" stroke-width=".8"/><use href="#tree" x="155" y="17"/><rect x="196" y="17" width="4" height="108" fill="#ece9d8"/></symbol>
<symbol id="sM" viewBox="0 0 200 125"><use href="#ff"/><rect y="10" width="200" height="4" fill="#2b2b2b"/><rect y="14" width="200" height="7" fill="#f5f5f5"/><rect x="8" y="15" width="15" height="5" fill="#e05a20"/><rect x="29" y="16" width="66" height="3.500" fill="#fff" stroke="#ccc" stroke-width=".4"/><rect x="97" y="16" width="10" height="3.500" fill="#4a88ee"/><path d="M175 18h20" stroke="#aaa"/><rect x="6" y="33" width="21" height="4" fill="#d04030"/><path d="M6 27h8M7 39h12M6 43h10M6 47h12M6 51h14M6 55h10M6 58h10M6 63h8M6 67h10M6 71h8M6 81h6M6 87h10M6 93h8" stroke="#888"/><rect x="30" y="25" width="12" height="3" fill="#eee"/><rect x="44" y="25" width="9" height="3" fill="#eee"/><rect x="56" y="25" width="9" height="3" fill="#ddd"/><path d="M64 32H160" stroke="#88aaee"/><path d="M30 37h15M64 36H160" stroke="#999"/><path d="M30 66h20M85 68h60M165 70h30" stroke="#bbb"/><use href="#tb"/></symbol>
<symbol id="sR" viewBox="0 0 200 125"><use href="#ff"/><rect y="11" width="200" height="6" fill="#f4f4f4"/><rect x="40" y="11" width="118" height="5" fill="#ffc850"/><rect x="46" y="12.500" width="16" height="2" fill="#fff"/><rect x="77" y="12.500" width="16" height="2" fill="#fff"/><path d="M47 27h20" stroke="#555" stroke-width="4"/><rect x="75" y="20" width="83" height="7" fill="#eee"/><path d="M78 24h70" stroke="#999" stroke-dasharray="8 4"/><rect x="40" y="34" width="118" height="6" fill="#ffa800"/><path d="M40 40V84M158 40V84" stroke="#fcdca0"/><path d="M43 43h15" stroke="#888" stroke-width="1.500"/><path d="M45 51h15M45 55h15M45 72h15" stroke="#aaa"/><g fill="#fff" stroke="#ddd" stroke-width=".5"><rect x="76" y="50" width="25" height="2"/><rect x="76" y="55" width="25" height="2"/><rect x="76" y="71" width="25" height="2"/></g><path d="M103 51h50M103 54h50M103 57h50M103 72h50M103 76h50M103 80h40" stroke="#b8a8a8"/><rect x="76" y="62" width="13" height="6" fill="#d8d8d8"/><rect y="82" width="200" height="3" fill="#dedbc8"/><path d="M5 88h70M5 92h60" stroke="#88b"/><rect x="158" y="85" width="1" height="20" fill="#aaa"/><use href="#tb"/></symbol>
</defs>
<rect width="881" height="824" fill="#9b9b9b"/>
<g style="filter:blur(.4px)">
<use href="#sW" x="9" y="-61" width="200" height="125"/><use href="#sA" x="229" y="-61" width="200" height="125"/><use href="#sS" x="450" y="-61" width="200" height="125"/><use href="#sW" x="670" y="-61" width="200" height="125"/>
<use href="#sD" x="9" y="97" width="200" height="125"/><use href="#sD" x="229" y="97" width="200" height="125"/><use href="#sE" x="450" y="97" width="200" height="125"/><use href="#sF" x="670" y="97" width="200" height="125"/>
<use href="#sB" x="9" y="255" width="200" height="125"/><use href="#sE" x="229" y="255" width="200" height="125"/><use href="#sH" x="450" y="255" width="200" height="125"/><use href="#sI" x="670" y="255" width="200" height="125"/>
<use href="#sG" x="9" y="413" width="200" height="125"/><use href="#sN" x="229" y="413" width="200" height="125"/><use href="#sJ" x="450" y="413" width="200" height="125"/><use href="#sP" x="670" y="413" width="200" height="125"/>
<use href="#sK" x="9" y="571" width="200" height="125"/><use href="#sK" x="229" y="571" width="200" height="125"/><use href="#sK" x="450" y="571" width="200" height="125"/><use href="#sL" x="670" y="571" width="200" height="125"/>
<use href="#sM" x="9" y="729" width="200" height="125"/><use href="#sQ" x="229" y="729" width="200" height="125"/><use href="#sR" x="450" y="729" width="200" height="125"/><use href="#sQ" x="670" y="729" width="200" height="125"/>
<rect x="229" y="820" width="155" height="2" fill="#fffdc8"/><rect x="670" y="793" width="155" height="2" fill="#fffdc8"/>
</g>
<g font-family="Liberation Sans" font-size="12" fill="#111" text-anchor="middle">
<text x="109" y="77">11:13</text><text x="329" y="77">11:15</text><text x="550" y="77">11:19</text><text x="770" y="77">11:21</text>
<text x="109" y="235">11:27</text><text x="329" y="235">11:30</text><text x="550" y="235">11:33</text><text x="770" y="235">11:37</text>
<text x="109" y="393">11:42</text><text x="329" y="393">11:45</text><text x="550" y="393">11:49</text><text x="770" y="393">11:51</text>
<text x="109" y="551">11:58</text><text x="329" y="551">12:00</text><text x="550" y="551">12:03</text><text x="770" y="551">12:07</text>
<text x="109" y="709">12:13</text><text x="329" y="709">12:16</text><text x="550" y="709">12:18</text><text x="770" y="709">12:21</text>
</g>
</svg>
</div></body></html>
